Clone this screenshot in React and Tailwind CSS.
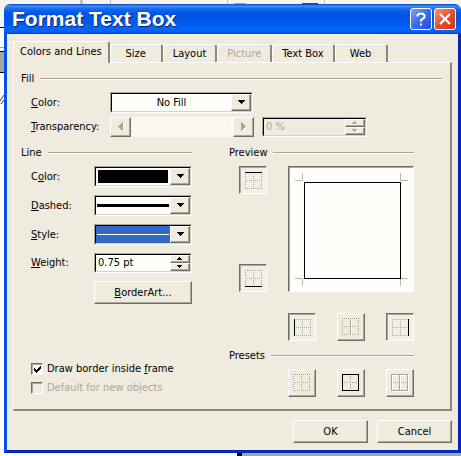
import { useState } from 'react'
import clsx from 'clsx'

const TABS = [
  { name: 'Colors and Lines' },
  { name: 'Size' },
  { name: 'Layout' },
  { name: 'Picture', disabled: true },
  { name: 'Text Box' },
  { name: 'Web' },
]

const RAISED =
  'border border-t-white border-l-white border-r-[#716f64] border-b-[#716f64] bg-[#efebde] shadow-[inset_-1px_-1px_0_#aca899]'

/* --------------------------
Small drawings
--------------------------- */

const ARROWS = {
  down: { w: 8, h: 5, d: 'M0 0h7v1h-1v1h-1v1h-1v1h-1v-1h-1v-1h-1v-1h-1z' },
  downSmall: { w: 8, h: 4, d: 'M0 0h5v1h-1v1h-1v1h-1v-1h-1v-1h-1z' },
  upSmall: { w: 8, h: 4, d: 'M2 0h1v1h1v1h1v1h-5v-1h1v-1h1z' },
  left: { w: 7, h: 10, d: 'M4 0h1v9h-1v-1h-1v-1h-1v-1h-1v-1h-1v-1h1v-1h1v-1h1v-1h1z' },
  right: { w: 7, h: 10, d: 'M0 0h1v1h1v1h1v1h1v1h1v1h-1v1h-1v1h-1v1h-1v1h-1z' },
}

function Arrow({ shape, disabled }) {
  const { w, h, d } = ARROWS[shape]
  return (
    <svg width={w} height={h} shapeRendering="crispEdges" aria-hidden="true">
      {disabled && <path d={d} fill="#fff" transform="translate(2 1)" />}
      <path d={d} fill={disabled ? '#aca899' : '#000'} transform="translate(1 0)" />
    </svg>
  )
}

// 17px dotted grid; `solid` lists the lines that are switched on
function GridIcon({ offset, solid = [], muted }) {
  const lines = {
    top: [0, 0, 17, 0],
    midH: [0, 8, 17, 8],
    bottom: [0, 16, 17, 16],
    left: [0, 0, 0, 17],
    midV: [8, 0, 8, 17],
    right: [16, 0, 16, 17],
  }
  const line = (key, props) => {
    const [x1, y1, x2, y2] = lines[key]
    const h = y1 === y2
    return (
      <line
        key={key}
        x1={h ? x1 : x1 + 0.5}
        x2={h ? x2 : x2 + 0.5}
        y1={h ? y1 + 0.5 : y1}
        y2={h ? y2 + 0.5 : y2}
        {...props}
      />
    )
  }
  return (
    <svg
      width="26"
      height="26"
      viewBox="1 1 26 26"
      shapeRendering="crispEdges"
      aria-hidden="true"
      className="block"
    >
      <g transform={`translate(${offset} ${offset})`}>
        {Object.keys(lines)
          .filter((k) => !solid.includes(k))
          .map((k) => line(k, { stroke: '#aca899', strokeDasharray: '1 1' }))}
        {muted && (
          <g transform="translate(1 1)">{solid.map((k) => line(k, { stroke: '#fff' }))}</g>
        )}
        {solid.map((k) => line(k, { stroke: muted ? '#aca899' : '#000' }))}
      </g>
    </svg>
  )
}

/* --------------------------
Controls
--------------------------- */

function GroupTitle({ children }) {
  return (
    <div className="flex h-[14px] items-center gap-1.5">
      <h2 className="leading-[14px]">{children}</h2>
      <div className="h-0.5 flex-1 border-t border-b border-t-[#aca899] border-b-white" />
    </div>
  )
}

function Sunken({ className, children }) {
  return (
    <div
      className={clsx(
        'border border-t-[#aca899] border-l-[#aca899] border-r-white border-b-white',
        className,
      )}
    >
      <div className="flex h-full border border-t-black border-l-black border-r-[#d8d4c4] border-b-[#d8d4c4]">
        {children}
      </div>
    </div>
  )
}

function Combo({ id, label, text, className, swatch }) {
  return (
    <Sunken className={clsx('h-[21px]', className)}>
      <div className="relative flex flex-1 bg-[#fdfffa]">
        <select
          id={id}
          className="w-full appearance-none bg-transparent pr-5 text-center leading-[17px] outline-none"
        >
          <option aria-label={label}>{text}</option>
        </select>
        <div className="pointer-events-none absolute inset-0 flex">
          <div className="flex flex-1 items-center">{swatch}</div>
          <div className={clsx('flex w-5 items-center justify-center', RAISED)}>
            <Arrow shape="down" />
          </div>
        </div>
      </div>
    </Sunken>
  )
}

function Spinner({ id, label, value, onChange, onStep, disabled, className }) {
  return (
    <Sunken className={clsx('h-5', className)}>
      <input
        id={id}
        aria-label={label}
        value={value}
        disabled={disabled}
        onChange={onChange}
        className="w-0 flex-1 bg-[#fdfffa] px-0.5 outline-none disabled:bg-[#efebde] disabled:text-[#aca899]"
      />
      <div className="flex w-5 flex-col">
        {['up', 'down'].map((dir) => (
          <button
            key={dir}
            type="button"
            aria-label={dir === 'up' ? 'Increase' : 'Decrease'}
            disabled={disabled}
            onClick={() => onStep?.(dir === 'up' ? 0.25 : -0.25)}
            className={clsx('flex flex-1 items-center justify-center', RAISED)}
          >
            <Arrow shape={`${dir}Small`} disabled={disabled} />
          </button>
        ))}
      </div>
    </Sunken>
  )
}

function GridButton({ label, pressed, onClick, solid, muted }) {
  return (
    <button
      type="button"
      aria-label={label}
      aria-pressed={pressed}
      disabled={muted}
      onClick={onClick}
      className={clsx(
        'size-7',
        pressed
          ? 'border border-t-[#716f64] border-l-[#716f64] border-r-white border-b-white bg-[#f2efe5] shadow-[inset_1px_1px_0_#aca899]'
          : RAISED,
      )}
    >
      <GridIcon offset={pressed ? 6 : 5} solid={solid} muted={muted} />
    </button>
  )
}

function CheckRow({ checked, onChange, disabled, children }) {
  return (
    <label
      className={clsx('flex h-[19px] items-center gap-1 pl-2.5', disabled && 'text-[#aca899]')}
    >
      <span className="relative flex">
        <input
          type="checkbox"
          checked={checked}
          onChange={onChange}
          disabled={disabled}
          className="size-3 appearance-none border border-t-[#716f64] border-l-[#716f64] border-r-white border-b-white bg-[#fdfffa] shadow-[inset_1px_1px_0_#aca899] disabled:bg-[#efebde]"
        />
        {checked && (
          <svg
            width="12"
            height="12"
            shapeRendering="crispEdges"
            className="pointer-events-none absolute inset-0"
            aria-hidden="true"
          >
            <path d="M3 5h1v1h1v1h1v-1h1v-1h1v-1h1v-1h1v3h-1v1h-1v1h-1v1h-1v1h-1v-1h-1v-1h-1z" />
          </svg>
        )}
      </span>
      <span>{children}</span>
    </label>
  )
}

function PushButton({ className, children }) {
  return (
    <button type="button" className={clsx('h-[23px] text-center', RAISED, className)}>
      {children}
    </button>
  )
}

/* --------------------------
Dialog parts
--------------------------- */

function TitleBar() {
  return (
    <header className="flex h-[30px] items-center gap-0.5 rounded-t-md bg-[linear-gradient(#0a3fc0_0,#3c8cf8_2px,#1668ee_5px,#0054e3_10px,#0058ea_18px,#0566fc_25px,#0560f4_28px,#0042c8_30px)] pr-[5px] pl-2">
      <h1 className="flex-1 font-['Liberation_Sans',Arial,sans-serif] text-[21px] leading-[30px] font-bold whitespace-nowrap text-white [text-shadow:1px_1px_0_#0a1f78]">
        Format Text Box
      </h1>
      <button
        type="button"
        aria-label="Help"
        className="flex size-[22px] items-center justify-center rounded-[3px] border border-white bg-linear-to-br from-[#7ea2f2] via-[#3a6bea] to-[#2050d0]"
      >
        <svg width="12" height="14" viewBox="0 0 12 14" fill="none" aria-hidden="true">
          <path
            d="M2.5 4.5V3.2L4 1.8h4l1.5 1.4v2L6 8.2v1.6"
            stroke="#fff"
            strokeWidth="2"
          />
          <path d="M5 11.5h2v2H5z" fill="#fff" />
        </svg>
      </button>
      <button
        type="button"
        aria-label="Close"
        className="flex size-[22px] items-center justify-center rounded-[3px] border border-white bg-linear-to-br from-[#f0967a] via-[#e2502c] to-[#c83810]"
      >
        <svg width="12" height="12" viewBox="0 0 12 12" aria-hidden="true">
          <path d="M1 1l10 10M11 1L1 11" stroke="#fff" strokeWidth="2.2" />
        </svg>
      </button>
    </header>
  )
}

function TabStrip({ active, onSelect }) {
  return (
    <div role="tablist" className="flex h-[21px] items-end">
      {TABS.map(({ name, disabled }) => (
        <button
          key={name}
          type="button"
          role="tab"
          aria-selected={active === name}
          disabled={disabled}
          onClick={() => onSelect(name)}
          className={clsx(
            'min-w-[53px] rounded-t-[3px] border-t border-r-2 border-l border-t-white border-r-[#8a877a] border-l-white whitespace-nowrap disabled:text-[#aca899]',
            active === name
              ? 'relative -mb-px h-[22px] bg-[#efebde] px-1.5 pb-0.5'
              : 'h-[18px] px-[9px]',
          )}
        >
          {name}
        </button>
      ))}
    </div>
  )
}

function FillGroup() {
  return (
    <section>
      <GroupTitle>Fill</GroupTitle>
      <div className="mt-1.5 flex items-center pl-2.5">
        <label htmlFor="fill-color" className="w-[79px]">
          <u>C</u>olor:
        </label>
        <Combo id="fill-color" text="No Fill" className="w-[143px]" />
      </div>
      <div className="mt-1 flex items-center pl-2.5">
        <label htmlFor="transparency" className="w-[79px]">
          <u>T</u>ransparency:
        </label>
        <div className="flex h-5 w-36">
          <button
            type="button"
            aria-label="Less"
            disabled
            className={clsx('flex w-[21px] items-center justify-center', RAISED)}
          >
            <Arrow shape="left" disabled />
          </button>
          <input
            id="transparency"
            type="range"
            disabled
            defaultValue="0"
            className="w-0 flex-1 appearance-none bg-[repeating-conic-gradient(#ffffff_0_25%,#f3f1e8_0_50%)] bg-[length:2px_2px] [&::-webkit-slider-thumb]:invisible"
          />
          <button
            type="button"
            aria-label="More"
            disabled
            className={clsx('flex w-[21px] items-center justify-center', RAISED)}
          >
            <Arrow shape="right" disabled />
          </button>
        </div>
        <Spinner
          label="Transparency percent"
          value="0 %"
          onChange={() => {}}
          disabled
          className="ml-2 w-[105px]"
        />
      </div>
    </section>
  )
}

function LineGroup() {
  const [weight, setWeight] = useState('0.75 pt')
  const [inside, setInside] = useState(true)

  const step = (by) => {
    const next = Math.max(0, (parseFloat(weight) || 0) + by)
    setWeight(`${next} pt`)
  }

  return (
    <section className="flex w-[171px] flex-col">
      <GroupTitle>Line</GroupTitle>
      <div className="mt-1.5 grid grid-cols-[63px_1fr] items-center gap-y-2 pl-2.5">
        <label htmlFor="line-color">
          C<u>o</u>lor:
        </label>
        <Combo
          id="line-color"
          label="Black"
          swatch={<div className="mx-0.5 h-[13px] flex-1 bg-black" />}
        />
        <label htmlFor="line-dash">
          <u>D</u>ashed:
        </label>
        <Combo
          id="line-dash"
          label="Solid"
          swatch={<div className="mx-px h-[3px] flex-1 bg-black" />}
        />
        <label htmlFor="line-style">
          <u>S</u>tyle:
        </label>
        <Combo
          id="line-style"
          label="Single"
          swatch={
            <div className="flex h-full flex-1 items-center bg-[#316ac5] px-px">
              <div className="h-px flex-1 bg-white" />
            </div>
          }
        />
        <label htmlFor="line-weight">
          <u>W</u>eight:
        </label>
        <Spinner
          id="line-weight"
          value={weight}
          onChange={(e) => setWeight(e.target.value)}
          onStep={step}
        />
        <PushButton className="col-start-2">
          <u>B</u>orderArt...
        </PushButton>
      </div>
      <div className="mt-auto">
        <CheckRow checked={inside} onChange={(e) => setInside(e.target.checked)}>
          Draw border inside <u>f</u>rame
        </CheckRow>
        <CheckRow checked={false} onChange={() => {}} disabled>
          Default for new objects
        </CheckRow>
      </div>
    </section>
  )
}

function PreviewPage({ sides }) {
  return (
    <div className="col-span-3 row-span-2 border border-t-[#716f64] border-l-[#716f64] border-r-white border-b-white bg-[#fdfffa] shadow-[inset_1px_1px_0_#aca899]">
      <svg
        viewBox="1 1 124 124"
        className="block w-full"
        shapeRendering="crispEdges"
        fill="none"
        aria-hidden="true"
      >
        <path
          d="M7 14.5h8M14.5 7v8M112.5 7v8M112 14.5h8M7 112.5h8M14.5 112v8M112.5 112v8M112 112.5h8"
          stroke="#b8b8b4"
        />
        <g stroke="#000">
          {sides.top && <path d="M16 16.5h97" />}
          {sides.bottom && <path d="M16 112.5h97" />}
          {sides.left && <path d="M16.5 16v97" />}
          {sides.right && <path d="M112.5 16v97" />}
        </g>
      </svg>
    </div>
  )
}

function PreviewGroup() {
  const [sides, setSides] = useState({ top: true, bottom: true, left: true, right: true })

  const setAll = (on) => setSides({ top: on, bottom: on, left: on, right: on })

  const side = (name) => (
    <GridButton
      label={`Border ${name}`}
      pressed={sides[name]}
      solid={sides[name] ? [name] : []}
      onClick={() => setSides((prev) => ({ ...prev, [name]: !prev[name] }))}
    />
  )

  return (
    <section className="w-[185px]">
      <GroupTitle>Preview</GroupTitle>
      <div className="mt-1.5 grid grid-cols-[repeat(4,28px)] gap-x-[21px] pl-2.5">
        <div className="row-span-2 flex flex-col justify-between">
          {side('top')}
          {side('bottom')}
        </div>
        <PreviewPage sides={sides} />
      </div>
      <div className="mt-[21px] flex justify-end gap-[21px]">
        {side('left')}
        <GridButton label="Border between columns" solid={['midV']} muted />
        {side('right')}
      </div>
      <div className="mt-2">
        <GroupTitle>Presets</GroupTitle>
      </div>
      <div className="mt-1.5 flex justify-end gap-[21px]">
        <GridButton label="None" onClick={() => setAll(false)} />
        <GridButton
          label="Box"
          solid={['top', 'bottom', 'left', 'right']}
          onClick={() => setAll(true)}
        />
        <GridButton label="All" solid={['top', 'bottom', 'left', 'right', 'midV']} muted />
      </div>
    </section>
  )
}

/* --------------------------
APP
--------------------------- */

export default function App() {
  const [tab, setTab] = useState('Colors and Lines')

  return (
    <div className="bg-[#f4f3ee] font-['DejaVu_Sans_Condensed','DejaVu_Sans',Tahoma,sans-serif] text-[11px] leading-[14px] text-black">
      {/* slivers of the document window behind the dialog */}
      <div className="flex h-1 items-end">
        <div className="ml-20 h-full w-[3px] bg-[#c4c2b8]" />
        <div className="ml-[27px] h-full w-px bg-[#c4c2b8]" />
        <div className="ml-[116px] h-full w-px bg-[#c4c2b8]" />
        <div className="ml-1.5 h-px w-3 bg-[#a8a8a0]" />
        <div className="ml-14 h-px w-4 bg-[#404040]" />
        <div className="ml-1.5 h-full w-px bg-[#c4c2b8]" />
      </div>
      <div className="flex">
        <div className="flex w-1 flex-col">
          <div className="h-6 border-b border-black" />
          <div className="h-5 border-b border-[#aca899] bg-white" />
          <div className="h-1 border-b border-black" />
          <div className="h-[21px] border-b border-black bg-[#a5a5ac]" />
          <div className="flex-1 bg-white">
            <svg width="4" height="32" aria-hidden="true">
              <path d="M0 28l4-6M1 31l3-4" stroke="#333" />
            </svg>
          </div>
        </div>
        <div role="dialog" aria-label="Format Text Box" className="flex-1">
          <TitleBar />
          <div className="border-r-[3px] border-b-[3px] border-l-[3px] border-r-[#0424b8] border-b-[#0428bc] border-l-[#0650ec] bg-[#efebde] px-1.5 pt-[7px] pb-[7px]">
            <TabStrip active={tab} onSelect={setTab} />
            <div
              role="tabpanel"
              className="border-t border-r-2 border-b-2 border-l border-t-white border-r-[#8a877a] border-b-[#8a877a] border-l-white px-[7px] pt-[9px] pb-3"
            >
              <FillGroup />
              <div className="mt-[9px] flex gap-[37px]">
                <LineGroup />
                <PreviewGroup />
              </div>
            </div>
            <div className="mt-[9px] flex justify-end gap-[9px]">
              <PushButton className="w-[75px]">OK</PushButton>
              <PushButton className="w-[75px]">Cancel</PushButton>
            </div>
          </div>
        </div>
      </div>
      <div className="flex h-[3px] bg-white">
        <div className="ml-[237px] w-[5px] bg-black" />
        <div className="flex-1 bg-[#a5a5a5]" />
      </div>
    </div>
  )
}
